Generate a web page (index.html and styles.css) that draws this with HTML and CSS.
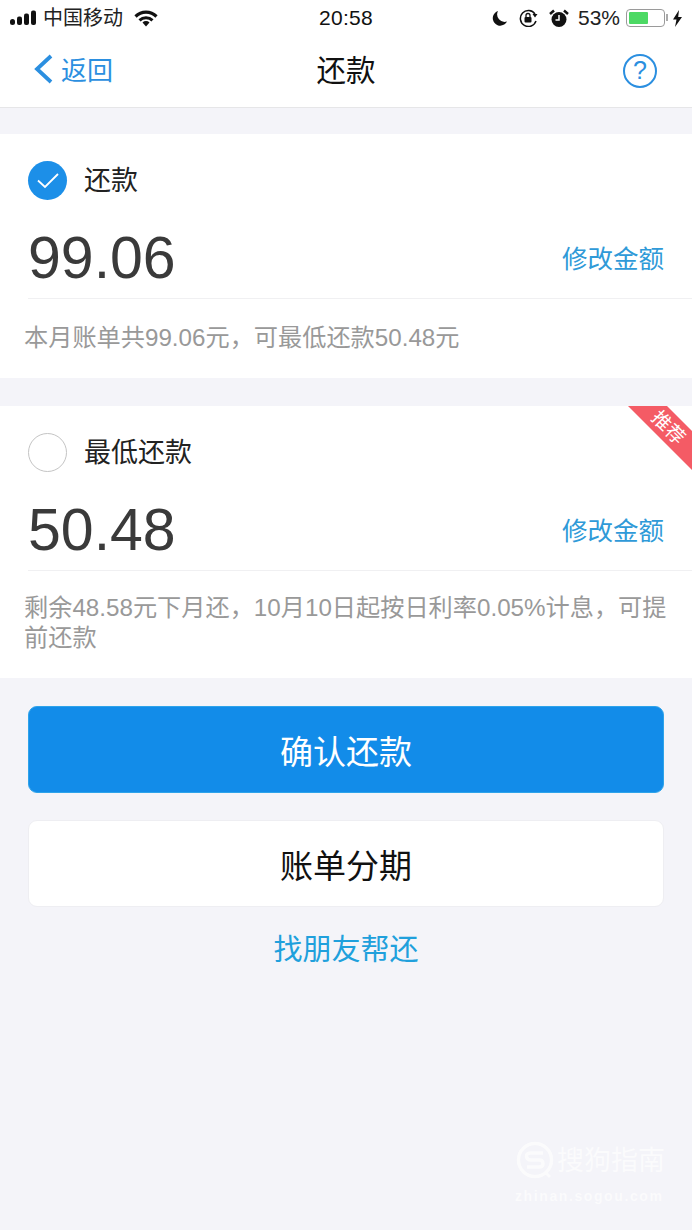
FILE: index.html
```html
<!DOCTYPE html>
<html lang="zh-CN">
<head>
<meta charset="utf-8">
<title>还款</title>
<link rel="stylesheet" href="styles.css">
</head>
<body>
<div class="page">
  <header class="top">
    <div class="status">
      <div class="status-side">
        <svg class="signal" width="27" height="16" viewBox="0 0 27 16"><rect x="0" y="9" width="5" height="6" rx="2.500"/><rect x="7" y="6.500" width="5" height="8.500" rx="2"/><rect x="14" y="3.500" width="5" height="11.500" rx="2"/><rect x="21" y="0.500" width="5" height="14.500" rx="2"/></svg>
        <span class="carrier">中国移动</span>
        <svg class="wifi" width="24" height="17" viewBox="0 0 24 17"><path d="M1.500 6.500a15 15 0 0 1 21 0" fill="none" stroke="#111" stroke-width="3.200"/><path d="M5.500 10.300a9.500 9.500 0 0 1 13 0" fill="none" stroke="#111" stroke-width="3"/><path d="M8.500 12.500a5 5 0 0 1 7 0L12 16.500z" fill="#111"/></svg>
      </div>
      <div class="clock">20:58</div>
      <div class="status-side status-right">
        <svg width="17" height="17" viewBox="0 0 17 17"><path d="M7 1a7.500 7.500 0 1 0 9 10.500A7.500 7.500 0 0 1 7 1z" fill="#111"/></svg>
        <svg class="lock" width="20" height="18" viewBox="0 0 20 18"><path d="M17 12a8 8 0 1 1-1-7" fill="none" stroke="#111" stroke-width="1.500"/><path d="M13.500 5h5l-2.500 3.500z" fill="#111"/><rect x="5.500" y="8" width="7" height="5.500" rx="1" fill="#111"/><path d="M7 8V6.500a2 2 0 0 1 4 0V8" fill="none" stroke="#111" stroke-width="1.300"/></svg>
        <svg class="alarm" width="20" height="19" viewBox="0 0 20 19"><circle cx="10" cy="10.500" r="7.500" fill="#111"/><path d="M1 5l4-3.500M19 5l-4-3.500" stroke="#111" stroke-width="2.500" fill="none"/><path d="M10 6v5H6.500" stroke="#fff" stroke-width="1.500" fill="none"/></svg>
        <span class="percent">53%</span>
        <span class="battery"><span class="battery-fill"></span></span>
        <svg class="bolt" width="11" height="17" viewBox="0 0 11 17"><path d="M7 0L1 9.500h3.500L3 17l7-10H6.200z" fill="#111"/></svg>
      </div>
    </div>
    <nav class="nav">
      <div class="back">
        <svg width="20" height="30" viewBox="0 0 20 30"><path d="M18 2L4 15l14 13" fill="none" stroke="#2b8fe0" stroke-width="3.800"/></svg>
        <span class="back-label">返回</span>
      </div>
      <h1 class="title">还款</h1>
      <div class="help">?</div>
    </nav>
  </header>

  <section class="card card-first">
    <div class="option">
      <span class="radio radio-on"><svg width="24" height="18" viewBox="0 0 24 18"><path d="M2 8.500l7 6.500L22 2" fill="none" stroke="#fff" stroke-width="1.800"/></svg></span>
      <span class="option-name">还款</span>
    </div>
    <div class="amount-row">
      <span class="amount">99.06</span>
      <span class="edit">修改金额</span>
    </div>
    <p class="note">本月账单共99.06元，可最低还款50.48元</p>
  </section>

  <section class="card card-second">
    <div class="ribbon"><span>推荐</span></div>
    <div class="option">
      <span class="radio"></span>
      <span class="option-name">最低还款</span>
    </div>
    <div class="amount-row">
      <span class="amount">50.48</span>
      <span class="edit">修改金额</span>
    </div>
    <p class="note">剩余48.58元下月还，10月10日起按日利率0.05%计息，可提前还款</p>
  </section>

  <div class="actions">
    <button class="btn btn-primary">确认还款</button>
    <button class="btn btn-plain">账单分期</button>
    <div class="friend">找朋友帮还</div>
  </div>

  <div class="watermark">
    <div class="wm-main">
      <svg width="40" height="40" viewBox="0 0 40 40"><circle cx="20" cy="19" r="16.500" fill="none" stroke="#fff" stroke-width="3.500"/><path d="M28 12H16q-5 0-4.500 3.500T16 19h8q4 0 4 3.500T24 26H12" fill="none" stroke="#fff" stroke-width="3.500"/><path d="M30 31l5 5" stroke="#fff" stroke-width="3"/></svg>
      <span>搜狗指南</span>
    </div>
    <div class="wm-url">zhinan.sogou.com</div>
  </div>
</div>
</body>
</html>
```

FILE: styles.css
```css
* { box-sizing: border-box; }
html, body { margin: 0; padding: 0; }
body {
  background: #f4f4f9;
  font-family: "Liberation Sans", "Noto Sans CJK SC", sans-serif;
}
.page { position: relative; width: 692px; height: 1230px; overflow: hidden; }

.top { background: #fff; height: 108px; border-bottom: 1px solid #e6e6e8; }
.status {
  height: 36px;
  padding: 0 10px;
  display: grid;
  grid-template-columns: 1fr auto 1fr;
  align-items: center;
  color: #111;
}
.status-side { display: flex; align-items: center; }
.status-right { justify-content: flex-end; margin-right: -1px; }
.signal { fill: #111; margin-right: 6px; }
.carrier { font-size: 20px; line-height: 24px; color: #222; }
.wifi { margin-left: 11px; }
.clock { font-size: 21px; letter-spacing: 0.300px; }
.lock { margin-left: 11px; }
.alarm { margin-left: 10px; }
.percent { font-size: 21px; margin-left: 9px; color: #222; }
.battery {
  position: relative;
  width: 39px;
  height: 18px;
  margin-left: 6px;
  padding: 2px;
  border: 1.500px solid #9a9a9a;
  border-radius: 4px;
  display: block;
}
.battery::after {
  content: "";
  position: absolute;
  right: -4px;
  top: 4px;
  width: 2px;
  height: 7px;
  background: #aaa;
}
.battery-fill { display: block; width: 19px; height: 100%; background: #4cd964; border-radius: 1px; }
.bolt { margin-left: 7px; }

.nav {
  height: 71px;
  padding: 0 33px 5px;
  display: grid;
  grid-template-columns: 1fr auto 1fr;
  align-items: center;
}
.back { display: flex; align-items: center; gap: 8px; color: #2b8fe0; font-size: 26px; }
.back-label { margin-bottom: 2px; }
.title { margin: 4px 0 0; font-size: 29.500px; font-weight: 400; color: #111; line-height: 40px; }
.help {
  justify-self: end;
  margin-top: 3px;
  margin-right: 2px;
  width: 34px;
  height: 34px;
  border: 2.500px solid #2b8fe0;
  border-radius: 50%;
  color: #2b8fe0;
  font-size: 25px;
  line-height: 29px;
  text-align: center;
}

.card { position: relative; background: #fff; padding-left: 28px; }
.card-first { margin-top: 26px; height: 244px; }
.card-second { margin-top: 28px; height: 272px; }
.option { height: 92px; padding-top: 27px; display: flex; align-items: flex-start; gap: 17px; }
.radio {
  width: 39px;
  height: 39px;
  border: 1.500px solid #c4c4c4;
  border-radius: 50%;
  display: flex;
  align-items: center;
  justify-content: center;
  flex: none;
}
.radio-on { background: #1c8fe8; border: 0; }
.option-name { font-size: 27px; line-height: 40px; color: #222; }
.amount-row {
  height: 73px;
  border-bottom: 1px solid #f0f0f2;
  padding: 0 28px 8px 0;
  display: flex;
  align-items: center;
  justify-content: space-between;
}
.amount { font-size: 59px; color: #3a3a3a; line-height: 65px; }
.edit { margin-bottom: 4px; font-size: 25.500px; color: #2f9ad8; }
.note {
  margin: 22px 20px 0 -4px;
  font-size: 24.200px;
  line-height: 30px;
  color: #999;
}
.card-first .note { margin-top: 24px; }

.ribbon {
  position: absolute;
  top: 0;
  right: 0;
  width: 64px;
  height: 64px;
  background: #f45b65;
  clip-path: polygon(0 0, 39px 0, 64px 25px, 64px 64px);
}
.ribbon span {
  position: absolute;
  left: 15px;
  top: 10px;
  width: 50px;
  text-align: center;
  color: #fff;
  font-size: 19px;
  line-height: 24px;
  transform: rotate(45deg);
  white-space: nowrap;
}

.actions { padding: 28px 28px 0; display: flex; flex-direction: column; align-items: stretch; }
.btn {
  height: 87px;
  border-radius: 9px;
  font-family: inherit;
  font-size: 33px;
  padding: 0;
}
.btn-primary { background: #128ce9; border: 1px solid #2ea3ea; color: #fff; }
.btn-plain { margin-top: 27px; background: #fff; border: 1px solid #eeeef2; color: #111; }
.friend { margin-top: 22px; text-align: center; font-size: 29px; line-height: 42px; color: #20a0dc; }

.watermark {
  position: absolute;
  left: 515px;
  top: 1141px;
  color: #fff;
  opacity: 0.65;
}
.wm-main { display: flex; align-items: center; gap: 2px; font-size: 27px; line-height: 40px; }
.wm-url {
  font-size: 14px;
  font-weight: 700;
  letter-spacing: 1.600px;
  line-height: 18px;
  margin-top: 6px;
}
```
